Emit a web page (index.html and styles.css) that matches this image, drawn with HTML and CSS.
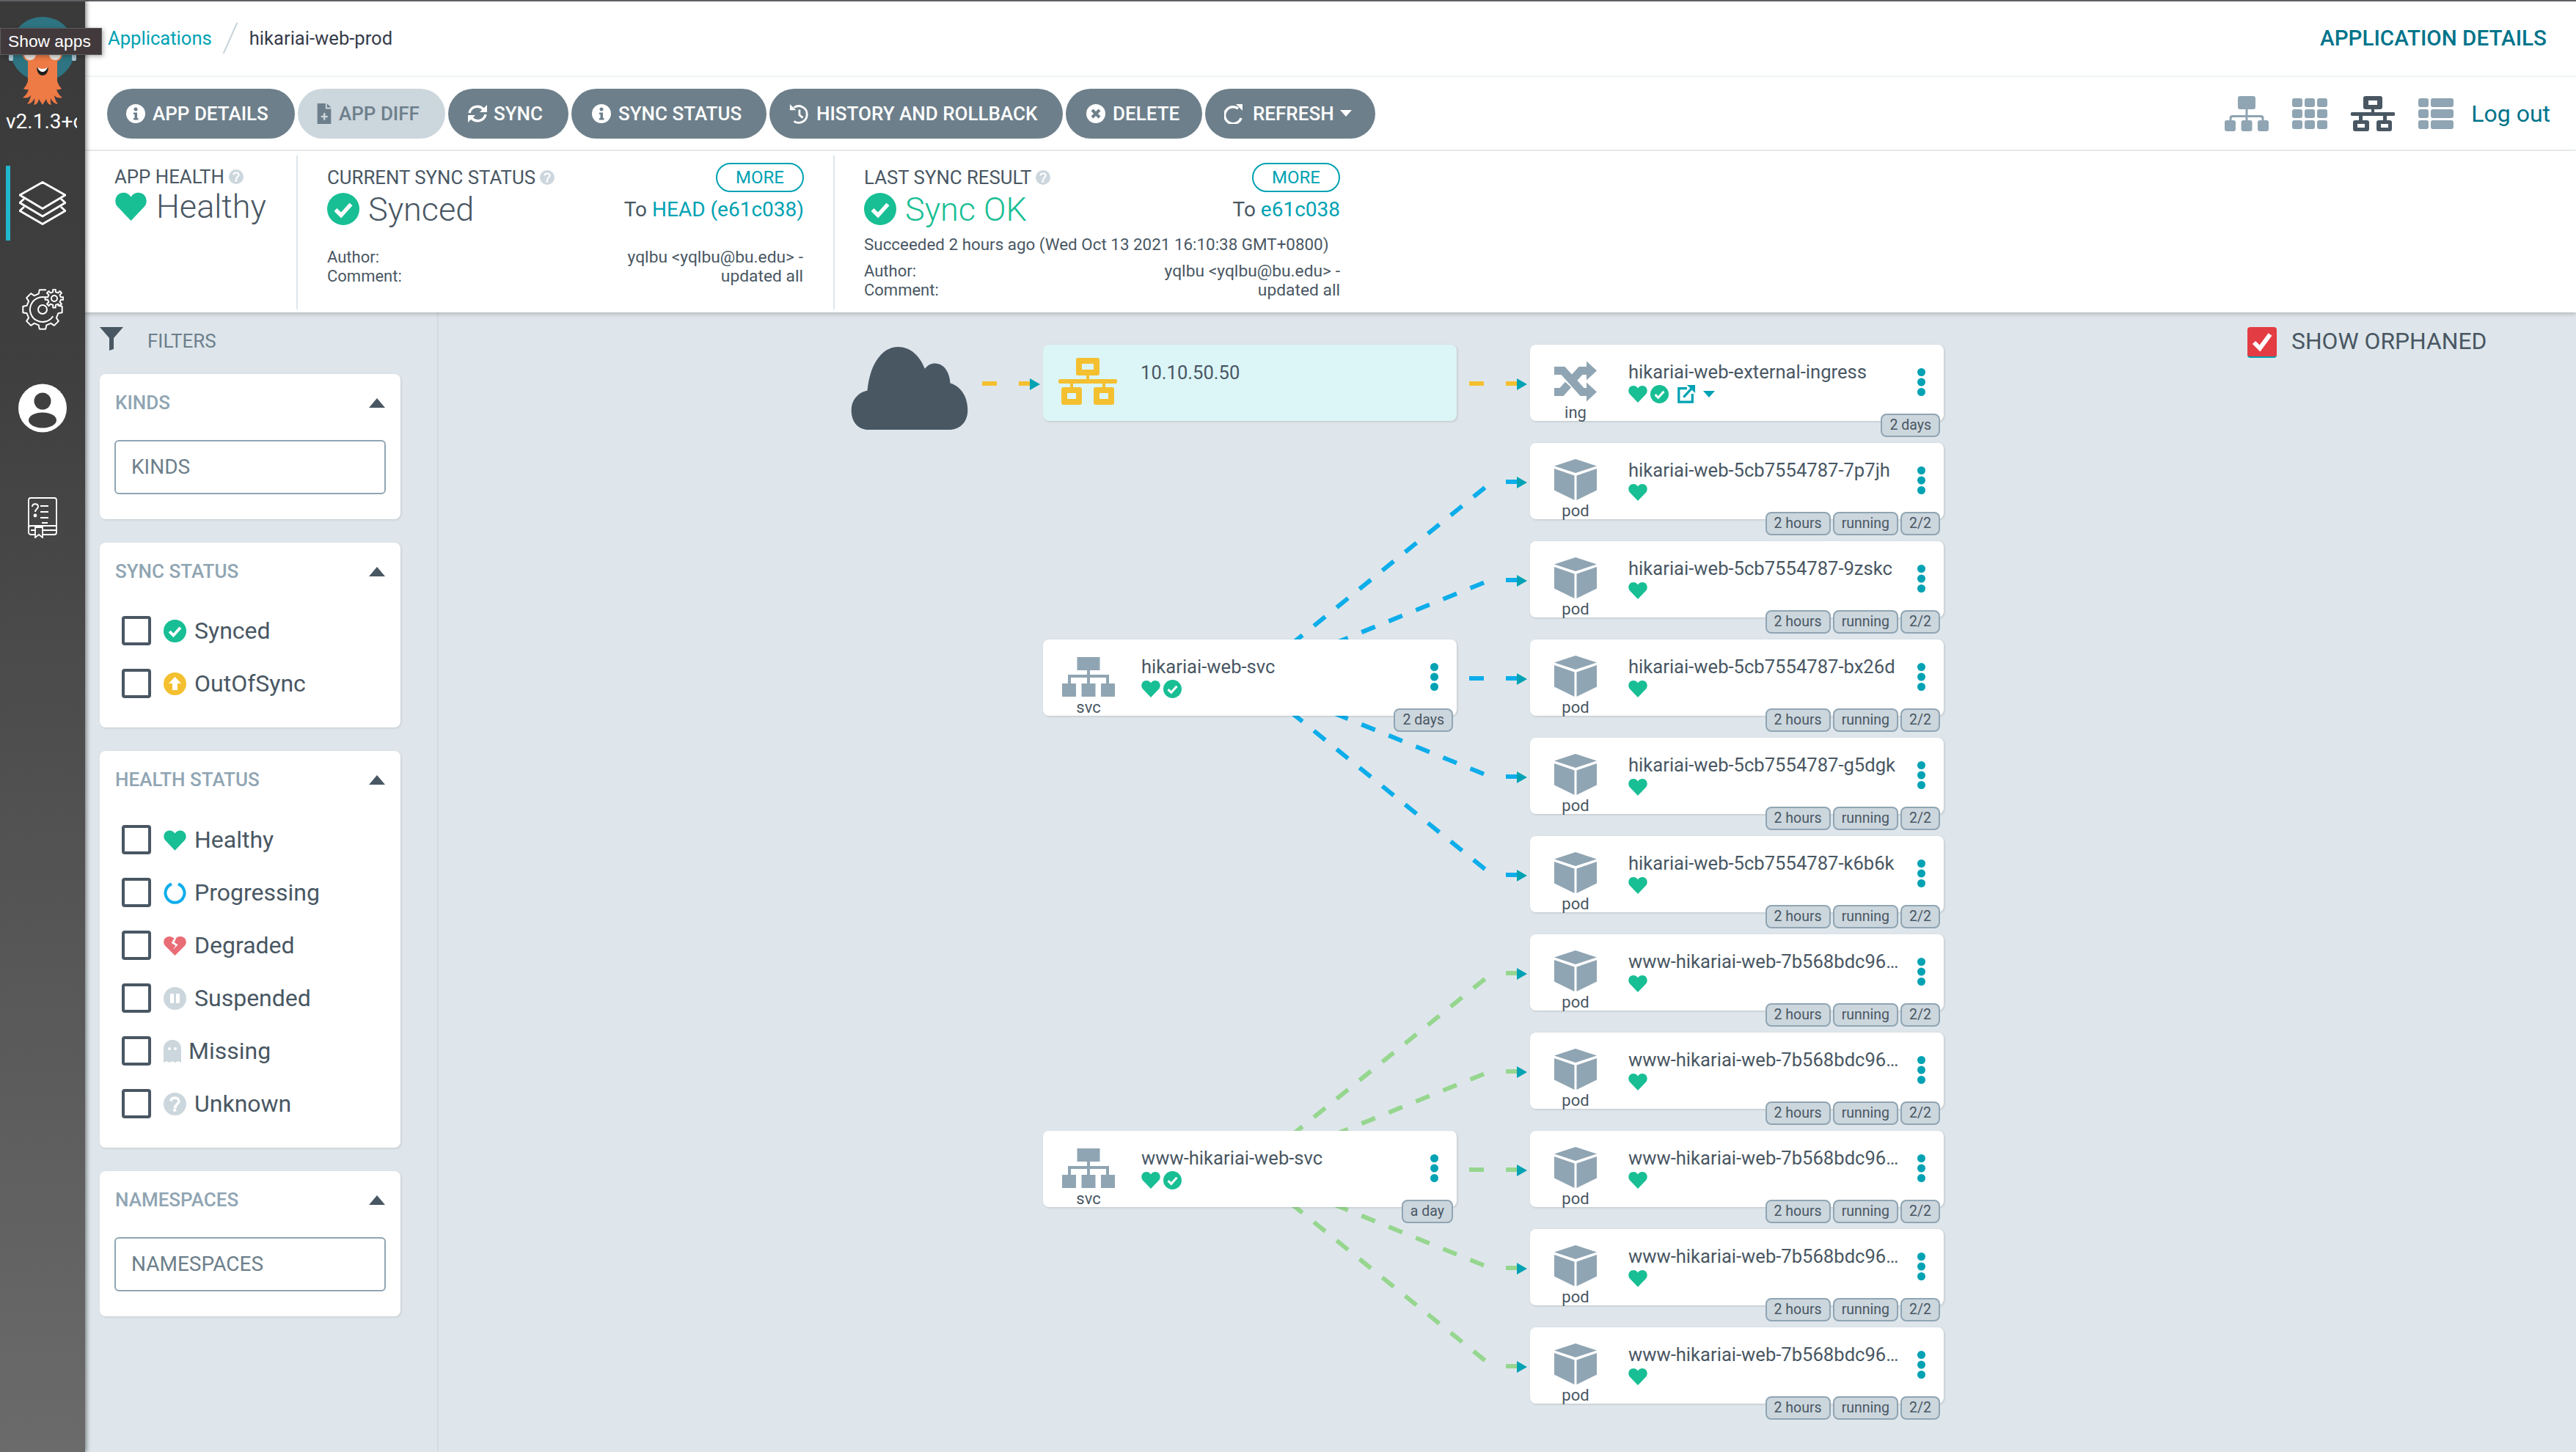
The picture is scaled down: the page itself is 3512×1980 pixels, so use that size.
FILE: index.html
```html
<!DOCTYPE html>
<html lang="en">
<head>
    <meta charset="UTF-8">
    <title>hikariai-web-prod - Argo CD</title>
    <link rel="stylesheet" href="styles.css">
</head>
<body>
    <!-- shared icons -->
    <svg class="icon-defs" width="0" height="0">
        <symbol id="i-heart" viewBox="0 0 26 24"><path d="M13 24 2 12.500C-1.500 8.500.500 1 7 1c2.800 0 4.800 1.500 6 3.500C14.200 2.500 16.200 1 19 1c6.500 0 8.500 7.500 5 11.500z"/></symbol>
        <symbol id="i-check" viewBox="0 0 44 44"><circle cx="22" cy="22" r="22"/><path d="M11.500 23 19 30.500 32.500 15.500" fill="none" stroke="#fff" stroke-width="5.500"/></symbol>
        <symbol id="i-pod" viewBox="0 0 58 56"><path d="M29 0 58 9.500 29 19 0 9.500zM0 13 27.500 22.500V56L0 42.500zM58 13 30.500 22.500V56L58 42.500z"/></symbol>
        <symbol id="i-svc" viewBox="0 0 72 54"><path d="M20.500 0h31v18h-31zM34 18h4v18h-4zM8 24h56v4H8zM8 24h4v12H8zM60 24h4v12h-4zM0 36h19v18H0zM26.500 36h19v18h-19zM53 36h19v18H53z"/></symbol>
        <symbol id="i-dots" viewBox="0 0 11 38"><circle cx="5.500" cy="5.500" r="5.500"/><circle cx="5.500" cy="19" r="5.500"/><circle cx="5.500" cy="32.500" r="5.500"/></symbol>
        <symbol id="i-info" viewBox="0 0 26 26"><circle cx="13" cy="13" r="13" fill="#fff"/><path d="M13 4.500a2.500 2.500 0 1 1 0 5 2.500 2.500 0 0 1 0-5zM10 11.500h5V19h1.500v2.500h-6.500V19H11.500v-5H10z" fill="#6d7f8b"/></symbol>
        <symbol id="i-help" viewBox="0 0 20 20"><circle cx="10" cy="10" r="10"/><path d="M6.500 7.500C6.500 5.500 8 4.500 10 4.500s3.500 1.100 3.500 3c0 2.600-3 2.400-3 5h-1.500" fill="none" stroke="#fff" stroke-width="2.200"/><circle cx="9.800" cy="15.300" r="1.500" fill="#fff"/></symbol>
    </svg>

    <nav class="nav">
        <div class="logo">
            <svg class="logo-img" viewBox="0 0 116 123">
                <circle cx="58" cy="44" r="44" fill="#2e7482"/>
                <rect x="12" y="50" width="6" height="10" rx="2" fill="#a9c6d6"/>
                <rect x="98" y="50" width="6" height="10" rx="2" fill="#a9c6d6"/>
                <path d="M38 50V88Q36 94 32 98Q36 100 39 99Q37 106 31 110Q38 112 42 107Q41 114 37 119Q44 118 47 111Q48 116 46 120Q52 119 53 112L58 120 63 112Q64 119 70 120Q68 116 69 111Q72 118 79 119Q75 114 74 107Q78 112 85 110Q79 106 77 99Q80 100 84 98Q80 94 78 88V50Z" fill="#ee7a45"/>
                <circle cx="41" cy="51" r="10" fill="#ee7a45"/>
                <circle cx="75" cy="51" r="10" fill="#ee7a45"/>
                <circle cx="41" cy="51" r="8" fill="#e9e4df"/>
                <circle cx="75" cy="51" r="8" fill="#e9e4df"/>
                <path d="M50 69Q58 74 66 69Q65 80 58 80Q51 80 50 69z" fill="#1e1e1e"/>
                <path d="M51 69Q58 73 65 69Q62 75 58 75Q54 75 51 69z" fill="#fff"/>
            </svg>
        </div>
        <div class="nav-tooltip">Show apps</div>
        <div class="version">v2.1.3+c1b2e4a</div>

        <div class="nav-item nav-active">
            <svg width="64" height="60" viewBox="0 0 64 60" fill="none" stroke="#fff" stroke-width="2.800" stroke-linejoin="round">
                <path d="M32 1.500 63 19 32 37.500 1 19z"/>
                <path d="M7 24 1 29.500 32 48 63 29.500 57 24"/>
                <path d="M7 35 1 40.500 32 58.500 63 40.500 57 35"/>
            </svg>
        </div>
        <div class="nav-item nav-gear">
            <svg width="58" height="56" viewBox="0 0 58 56" fill="none" stroke="#fff" stroke-width="2" stroke-linejoin="round" stroke-linecap="round">
                <path d="M50.350 22.680 55.670 23.780V32.220L50.350 33.320 47.860 39.330 50.840 43.870 44.870 49.840 40.330 46.860 34.320 49.350 33.220 54.670H24.780L23.680 49.350 17.670 46.860 13.130 49.840 7.160 43.870 10.140 39.330 7.650 33.320 2.330 32.220V23.780L7.650 22.680 10.140 16.670 7.160 12.130 13.130 6.160 17.670 9.140 23.680 6.650 24.780 1.330H33.220"/>
                <path d="M33.400 11.600A17 17 0 1 0 42.900 37.750"/>
                <circle cx="29" cy="28" r="6"/>
                <g transform="translate(45 13)">
                    <path fill="#3e3e3e" d="M8.800-1.870 12.380-1.740V1.740L8.800 1.870 7.550 4.900 9.980 7.520 7.520 9.980 4.900 7.550 1.870 8.800 1.740 12.380H-1.740L-1.870 8.800-4.900 7.550-7.520 9.980-9.980 7.520-7.550 4.900-8.800 1.870-12.380 1.740V-1.740L-8.800-1.870-7.550-4.900-9.980-7.520-7.520-9.980-4.900-7.550-1.870-8.800-1.740-12.380H1.740L1.870-8.800 4.900-7.550 7.520-9.980 9.980-7.520 7.550-4.900z"/>
                    <circle r="4"/>
                </g>
            </svg>
        </div>
        <div class="nav-item nav-user">
            <svg width="66" height="67" viewBox="0 0 66 67">
                <circle cx="33" cy="33.500" r="33" fill="#fff"/>
                <circle cx="33" cy="24" r="11.500" fill="#3f3f3f"/>
                <ellipse cx="33" cy="50" rx="19" ry="10.500" fill="#3f3f3f"/>
            </svg>
        </div>
        <div class="nav-item nav-book">
            <svg width="40" height="56" viewBox="0 0 40 56" fill="none" stroke="#fff" stroke-width="1.800">
                <path d="M4 1h32a3 3 0 0 1 3 3v44a3 3 0 0 1-3 3H4a3 3 0 0 1-3-3V4a3 3 0 0 1 3-3z"/>
                <path d="M1 42a3 3 0 0 1 3-3h35M4 45h35"/>
                <path d="M10 41h10v14l-5-4-5 4z" fill="#474747"/>
                <path d="M17 12h11M17 20h11M17 28h11M19 35h8" stroke-width="2"/>
                <path d="M6 13c0-5 8-5 8 0 0 3-4 3-4 7" stroke-width="2"/>
                <circle cx="10" cy="25" r="1.500" fill="#fff"/>
            </svg>
        </div>
    </nav>

    <div class="main">
        <div class="top-bar">
            <div class="breadcrumbs">
                <a class="crumb-link">Applications</a>
                <span class="crumb-sep"></span>
                <span class="crumb-current">hikariai-web-prod</span>
            </div>
            <div class="page-title">APPLICATION DETAILS</div>
        </div>

        <div class="toolbar">
            <div class="actions">
                <div class="btn btn-details"><svg class="btn-icon"><use href="#i-info"/></svg>APP DETAILS</div>
                <div class="btn btn-diff">
                    <svg class="btn-icon btn-icon-file" viewBox="0 0 20 30"><path d="M0 0h12v8h8v22H0z" fill="#6d7f8b"/><path d="M14 0l6 6h-6z" fill="#6d7f8b"/><path d="M9 14h2.500v4H15v2.500h-3.500v4H9v-4H5.500V18H9z" fill="#ccd6dd"/></svg>
                    APP DIFF
                </div>
                <div class="btn btn-sync">
                    <svg class="btn-icon" viewBox="0 0 28 26" fill="none" stroke="#fff" stroke-width="3.500"><path d="M3 12A11 11 0 0 1 22 7"/><path d="M27 1V11H17z" fill="#fff" stroke="none"/><path d="M25 14A11 11 0 0 1 6 19"/><path d="M1 25V15H11z" fill="#fff" stroke="none"/></svg>
                    SYNC
                </div>
                <div class="btn btn-status"><svg class="btn-icon"><use href="#i-info"/></svg>SYNC STATUS</div>
                <div class="btn btn-history">
                    <svg class="btn-icon" viewBox="0 0 28 30" fill="none" stroke="#fff" stroke-width="3"><path d="M7 6C14 1 26 5 26 16S14 31 7 26"/><path d="M1 1v9h9z" fill="#fff" stroke="none"/><path d="M15 9v8l5 4"/></svg>
                    HISTORY AND ROLLBACK
                </div>
                <div class="btn btn-delete">
                    <svg class="btn-icon" viewBox="0 0 26 26"><circle cx="13" cy="13" r="13" fill="#fff"/><path d="M8 8l10 10M18 8 8 18" stroke="#6d7f8b" stroke-width="4"/></svg>
                    DELETE
                </div>
                <div class="btn btn-refresh">
                    <svg class="btn-icon" viewBox="0 0 26 28" fill="none" stroke="#fff" stroke-width="3.500"><path d="M19 7A11.500 11.500 0 1 0 23 20"/><path d="M16 1h9v9z" fill="#fff" stroke="none"/></svg>
                    REFRESH<span class="btn-caret"></span>
                </div>
            </div>
            <div class="view-tools">
                <svg class="view-icon view-tree" viewBox="0 0 60 48"><path d="M21 0h18a3 3 0 0 1 3 3v12a3 3 0 0 1-3 3H21a3 3 0 0 1-3-3V3a3 3 0 0 1 3-3zM28.500 18h3v8h18a4 4 0 0 1 4 4v3h-3v-2a2 2 0 0 0-2-2H31.500v5h-3v-5H11.500a2 2 0 0 0-2 2v2h-3v-3a4 4 0 0 1 4-4h18z"/><rect y="33" width="15" height="15" rx="3"/><rect x="22.500" y="33" width="15" height="15" rx="3"/><rect x="45" y="33" width="15" height="15" rx="3"/></svg>
                <svg class="view-icon view-grid" viewBox="0 0 48 42"><rect width="14" height="12" rx="3"/><rect x="17" width="14" height="12" rx="3"/><rect x="34" width="14" height="12" rx="3"/><rect y="15" width="14" height="12" rx="3"/><rect x="17" y="15" width="14" height="12" rx="3"/><rect x="34" y="15" width="14" height="12" rx="3"/><rect y="30" width="14" height="12" rx="3"/><rect x="17" y="30" width="14" height="12" rx="3"/><rect x="34" y="30" width="14" height="12" rx="3"/></svg>
                <svg class="view-icon view-network" viewBox="0 0 60 48"><path fill-rule="evenodd" d="M20 0h20a3 3 0 0 1 3 3v12a3 3 0 0 1-3 3H32v4h26a2 2 0 0 1 0 5H49v6h4a3 3 0 0 1 3 3v9a3 3 0 0 1-3 3H38a3 3 0 0 1-3-3v-9a3 3 0 0 1 3-3h6v-6H16v6h6a3 3 0 0 1 3 3v9a3 3 0 0 1-3 3H6a3 3 0 0 1-3-3v-9a3 3 0 0 1 3-3h5v-6H2a2 2 0 0 1 0-5h26v-4h-8a3 3 0 0 1-3-3V3a3 3 0 0 1 3-3zm4 6v6h12V6zM9 38v5h10v-5zm32 0v5h10v-5z"/></svg>
                <svg class="view-icon view-list" viewBox="0 0 48 42"><rect width="14" height="12" rx="3"/><rect x="17" width="31" height="12" rx="3"/><rect y="15" width="14" height="12" rx="3"/><rect x="17" y="15" width="31" height="12" rx="3"/><rect y="30" width="14" height="12" rx="3"/><rect x="17" y="30" width="31" height="12" rx="3"/></svg>
                <a class="logout">Log out</a>
            </div>
        </div>

        <div class="summary">
            <div class="summary-block block-health">
                <div class="summary-label">APP HEALTH <svg class="help"><use href="#i-help"/></svg></div>
                <div class="summary-status">
                    <svg class="status-heart"><use href="#i-heart"/></svg>
                    <span>Healthy</span>
                </div>
            </div>
            <div class="summary-block block-sync">
                <div class="summary-head">
                    <div class="summary-label">CURRENT SYNC STATUS <svg class="help"><use href="#i-help"/></svg></div>
                    <a class="more">MORE</a>
                </div>
                <div class="summary-head">
                    <div class="summary-status">
                        <svg class="status-check"><use href="#i-check"/></svg>
                        <span>Synced</span>
                    </div>
                    <div class="revision">To <a>HEAD (e61c038)</a></div>
                </div>
                <div class="commit commit-current">
                    <div>Author:<br>Comment:</div>
                    <div class="commit-value">yqlbu &lt;yqlbu@bu.edu&gt; -<br>updated all</div>
                </div>
            </div>
            <div class="summary-block block-result">
                <div class="summary-head">
                    <div class="summary-label">LAST SYNC RESULT <svg class="help"><use href="#i-help"/></svg></div>
                    <a class="more">MORE</a>
                </div>
                <div class="summary-head">
                    <div class="summary-status status-ok">
                        <svg class="status-check"><use href="#i-check"/></svg>
                        <span>Sync OK</span>
                    </div>
                    <div class="revision">To <a>e61c038</a></div>
                </div>
                <div class="succeeded">Succeeded 2 hours ago (Wed Oct 13 2021 16:10:38 GMT+0800)</div>
                <div class="commit">
                    <div>Author:<br>Comment:</div>
                    <div class="commit-value">yqlbu &lt;yqlbu@bu.edu&gt; -<br>updated all</div>
                </div>
            </div>
        </div>

        <div class="content">
            <aside class="filters">
                <div class="filters-head">
                    <svg class="filter-icon" viewBox="0 0 32 32"><path d="M0 0h32L19 15v15l-6 2V15z"/></svg>
                    <span>FILTERS</span>
                </div>

                <div class="filter-card">
                    <div class="filter-title">KINDS<span class="filter-caret"></span></div>
                    <div class="filter-input">KINDS</div>
                </div>

                <div class="filter-card">
                    <div class="filter-title">SYNC STATUS<span class="filter-caret"></span></div>
                    <div class="filter-rows">
                        <div class="filter-row"><span class="box"></span><svg class="row-icon row-green"><use href="#i-check"/></svg>Synced</div>
                        <div class="filter-row">
                            <span class="box"></span>
                            <svg class="row-icon" viewBox="0 0 31 31"><circle cx="15.500" cy="15.500" r="15.500" fill="#f4c030"/><path d="M15.500 6 24 15h-5v9h-7v-9H7z" fill="#fff"/></svg>
                            OutOfSync
                        </div>
                    </div>
                </div>

                <div class="filter-card">
                    <div class="filter-title">HEALTH STATUS<span class="filter-caret"></span></div>
                    <div class="filter-rows rows-health">
                        <div class="filter-row"><span class="box"></span><svg class="row-icon row-green"><use href="#i-heart"/></svg>Healthy</div>
                        <div class="filter-row">
                            <span class="box"></span>
                            <svg class="row-icon" viewBox="0 0 31 31" fill="none" stroke="#0dadea" stroke-width="4"><path d="M11 3.500a13 13 0 1 0 9 0"/></svg>
                            Progressing
                        </div>
                        <div class="filter-row">
                            <span class="box"></span>
                            <svg class="row-icon" viewBox="0 0 32 28"><path d="M16 28 2 14C-2 9 1 1 8 1c3 0 5 1 7 3l-4 6 6 4-4 6 7-7-5-4 3-6c2-2 4-2 6-2 7 0 10 8 6 13z" fill="#e96d76"/></svg>
                            Degraded
                        </div>
                        <div class="filter-row">
                            <span class="box"></span>
                            <svg class="row-icon" viewBox="0 0 31 31"><circle cx="15.500" cy="15.500" r="15.500" fill="#ccd6dd"/><path d="M9 9h5v13H9zM17 9h5v13h-5z" fill="#fff"/></svg>
                            Suspended
                        </div>
                        <div class="filter-row row-missing">
                            <span class="box"></span>
                            <svg class="row-icon" viewBox="0 0 24 31"><path d="M12 0c7 0 12 5 12 12v19l-4-2-4 2-4-2-4 2-4-2-4 2V12C0 5 5 0 12 0z" fill="#ccd6dd"/><circle cx="8" cy="12" r="2" fill="#fff"/><circle cx="16" cy="12" r="2" fill="#fff"/></svg>
                            Missing
                        </div>
                        <div class="filter-row"><span class="box"></span><svg class="row-icon row-grey"><use href="#i-help"/></svg>Unknown</div>
                    </div>
                </div>

                <div class="filter-card">
                    <div class="filter-title">NAMESPACES<span class="filter-caret"></span></div>
                    <div class="filter-input">NAMESPACES</div>
                </div>
            </aside>

            <div class="graph">
                <label class="orphaned">
                    <span class="orphaned-box"><svg viewBox="0 0 40 40"><path d="M9 21l8 8 14-19" fill="none" stroke="#fff" stroke-width="6"/></svg></span>
                    SHOW ORPHANED
                </label>

                <!-- edges use page coordinates: a dashed run, then a short tail into the arrow -->
                <svg class="edges" viewBox="598 426 2914 1554">
                    <defs>
                        <marker id="arrow" markerUnits="userSpaceOnUse" markerWidth="14" markerHeight="16" refX="0" refY="7" orient="0">
                            <path d="M0 0 14 8 0 16z" fill="#00a2b3"/>
                        </marker>
                    </defs>
                    <g class="edge edge-yellow">
                        <path d="M1339 523H1359"/>
                        <path class="tail" d="M1389 523H1404" marker-end="url(#arrow)"/>
                        <path d="M1723 523H2023"/>
                        <path class="tail" d="M2053 523H2068" marker-end="url(#arrow)"/>
                    </g>
                    <g class="edge edge-blue">
                        <path d="M1698 929 2025.500 664"/>
                        <path class="tail" d="M2053 657H2068" marker-end="url(#arrow)"/>
                        <path d="M1708 922.300 2023 794.500"/>
                        <path class="tail" d="M2053 791H2068" marker-end="url(#arrow)"/>
                        <path d="M1723 925H2023"/>
                        <path class="tail" d="M2053 925H2068" marker-end="url(#arrow)"/>
                        <path d="M1708 927.700 2023 1055.500"/>
                        <path class="tail" d="M2053 1059H2068" marker-end="url(#arrow)"/>
                        <path d="M1698 921 2025.500 1186"/>
                        <path class="tail" d="M2053 1193H2068" marker-end="url(#arrow)"/>
                    </g>
                    <g class="edge edge-green">
                        <path d="M1698 1599 2025.500 1334"/>
                        <path class="tail" d="M2053 1327H2068" marker-end="url(#arrow)"/>
                        <path d="M1708 1592.300 2023 1464.500"/>
                        <path class="tail" d="M2053 1461H2068" marker-end="url(#arrow)"/>
                        <path d="M1723 1595H2023"/>
                        <path class="tail" d="M2053 1595H2068" marker-end="url(#arrow)"/>
                        <path d="M1708 1597.700 2023 1725.500"/>
                        <path class="tail" d="M2053 1729H2068" marker-end="url(#arrow)"/>
                        <path d="M1698 1591 2025.500 1856"/>
                        <path class="tail" d="M2053 1863H2068" marker-end="url(#arrow)"/>
                    </g>
                </svg>

                <svg class="cloud" viewBox="0 0 160 114"><path d="M24 114C8 114 0 102 0 87c0-13 8-24 22-27C25 25 42 0 64 0c17 0 30 12 37 30 5-6 10-8 16-7 11 1 18 12 19 27 14 4 24 18 24 37 0 16-10 27-26 27z"/></svg>

                <div class="node node-lb">
                    <svg class="lb-icon" viewBox="0 0 80 64"><path fill-rule="evenodd" d="M27 0h26a3 3 0 0 1 3 3v18a3 3 0 0 1-3 3H42v5h36a2 2 0 0 1 2 2v2a2 2 0 0 1-2 2H64v5h9a3 3 0 0 1 3 3v18a3 3 0 0 1-3 3H51a3 3 0 0 1-3-3V43a3 3 0 0 1 3-3h9v-5H20v5h9a3 3 0 0 1 3 3v18a3 3 0 0 1-3 3H7a3 3 0 0 1-3-3V43a3 3 0 0 1 3-3h9v-5H2a2 2 0 0 1-2-2v-2a2 2 0 0 1 2-2h36v-5H27a3 3 0 0 1-3-3V3a3 3 0 0 1 3-3zm5 8v8h16V8zM12 48v8h12v-8zm44 0v8h12v-8z"/></svg>
                    <div class="node-name lb-name">10.10.50.50</div>
                </div>

                <div class="node node-svc svc-web">
                    <div class="kind"><svg class="kind-svc"><use href="#i-svc"/></svg><span>svc</span></div>
                    <div class="node-info">
                        <div class="node-name">hikariai-web-svc</div>
                        <div class="node-status"><svg class="st-heart"><use href="#i-heart"/></svg><svg class="st-check"><use href="#i-check"/></svg></div>
                    </div>
                    <svg class="node-dots"><use href="#i-dots"/></svg>
                    <div class="badges"><span>2 days</span></div>
                </div>
                <div class="node node-svc svc-www">
                    <div class="kind"><svg class="kind-svc"><use href="#i-svc"/></svg><span>svc</span></div>
                    <div class="node-info">
                        <div class="node-name">www-hikariai-web-svc</div>
                        <div class="node-status"><svg class="st-heart"><use href="#i-heart"/></svg><svg class="st-check"><use href="#i-check"/></svg></div>
                    </div>
                    <svg class="node-dots"><use href="#i-dots"/></svg>
                    <div class="badges"><span>a day</span></div>
                </div>

                <div class="pods">
                    <div class="node">
                        <div class="kind">
                            <svg class="kind-ing" viewBox="0 0 58 55"><g fill="none" stroke="#90a5b3" stroke-width="11"><path d="M0 13H12L38 42H46"/><path d="M0 42H10L19 32"/><path d="M26 24 36 13H46"/></g><path d="M44 0 58 13 44 26zM44 29 58 42 44 55z"/></svg>
                            <span>ing</span>
                        </div>
                        <div class="node-info">
                            <div class="node-name">hikariai-web-external-ingress</div>
                            <div class="node-status">
                                <svg class="st-heart"><use href="#i-heart"/></svg><svg class="st-check"><use href="#i-check"/></svg>
                                <svg class="st-link" viewBox="0 0 26 28" fill="none" stroke="#00a2b3" stroke-width="3.500"><path d="M14 6H2v20h20V14"/><path d="M9 19 23 4"/><path d="M14 1h12v12z" fill="#00a2b3" stroke="none"/></svg>
                                <span class="st-caret"></span>
                            </div>
                        </div>
                        <svg class="node-dots"><use href="#i-dots"/></svg>
                        <div class="badges"><span>2 days</span></div>
                    </div>

                    <div class="node">
                        <div class="kind"><svg class="kind-pod"><use href="#i-pod"/></svg><span>pod</span></div>
                        <div class="node-info"><div class="node-name">hikariai-web-5cb7554787-7p7jh</div><div class="node-status"><svg class="st-heart"><use href="#i-heart"/></svg></div></div>
                        <svg class="node-dots"><use href="#i-dots"/></svg>
                        <div class="badges"><span>2 hours</span><span>running</span><span>2/2</span></div>
                    </div>
                    <div class="node">
                        <div class="kind"><svg class="kind-pod"><use href="#i-pod"/></svg><span>pod</span></div>
                        <div class="node-info"><div class="node-name">hikariai-web-5cb7554787-9zskc</div><div class="node-status"><svg class="st-heart"><use href="#i-heart"/></svg></div></div>
                        <svg class="node-dots"><use href="#i-dots"/></svg>
                        <div class="badges"><span>2 hours</span><span>running</span><span>2/2</span></div>
                    </div>
                    <div class="node">
                        <div class="kind"><svg class="kind-pod"><use href="#i-pod"/></svg><span>pod</span></div>
                        <div class="node-info"><div class="node-name">hikariai-web-5cb7554787-bx26d</div><div class="node-status"><svg class="st-heart"><use href="#i-heart"/></svg></div></div>
                        <svg class="node-dots"><use href="#i-dots"/></svg>
                        <div class="badges"><span>2 hours</span><span>running</span><span>2/2</span></div>
                    </div>
                    <div class="node">
                        <div class="kind"><svg class="kind-pod"><use href="#i-pod"/></svg><span>pod</span></div>
                        <div class="node-info"><div class="node-name">hikariai-web-5cb7554787-g5dgk</div><div class="node-status"><svg class="st-heart"><use href="#i-heart"/></svg></div></div>
                        <svg class="node-dots"><use href="#i-dots"/></svg>
                        <div class="badges"><span>2 hours</span><span>running</span><span>2/2</span></div>
                    </div>
                    <div class="node">
                        <div class="kind"><svg class="kind-pod"><use href="#i-pod"/></svg><span>pod</span></div>
                        <div class="node-info"><div class="node-name">hikariai-web-5cb7554787-k6b6k</div><div class="node-status"><svg class="st-heart"><use href="#i-heart"/></svg></div></div>
                        <svg class="node-dots"><use href="#i-dots"/></svg>
                        <div class="badges"><span>2 hours</span><span>running</span><span>2/2</span></div>
                    </div>

                    <div class="node">
                        <div class="kind"><svg class="kind-pod"><use href="#i-pod"/></svg><span>pod</span></div>
                        <div class="node-info"><div class="node-name">www-hikariai-web-7b568bdc96-4fkdz</div><div class="node-status"><svg class="st-heart"><use href="#i-heart"/></svg></div></div>
                        <svg class="node-dots"><use href="#i-dots"/></svg>
                        <div class="badges"><span>2 hours</span><span>running</span><span>2/2</span></div>
                    </div>
                    <div class="node">
                        <div class="kind"><svg class="kind-pod"><use href="#i-pod"/></svg><span>pod</span></div>
                        <div class="node-info"><div class="node-name">www-hikariai-web-7b568bdc96-8tnvw</div><div class="node-status"><svg class="st-heart"><use href="#i-heart"/></svg></div></div>
                        <svg class="node-dots"><use href="#i-dots"/></svg>
                        <div class="badges"><span>2 hours</span><span>running</span><span>2/2</span></div>
                    </div>
                    <div class="node">
                        <div class="kind"><svg class="kind-pod"><use href="#i-pod"/></svg><span>pod</span></div>
                        <div class="node-info"><div class="node-name">www-hikariai-web-7b568bdc96-cx9qm</div><div class="node-status"><svg class="st-heart"><use href="#i-heart"/></svg></div></div>
                        <svg class="node-dots"><use href="#i-dots"/></svg>
                        <div class="badges"><span>2 hours</span><span>running</span><span>2/2</span></div>
                    </div>
                    <div class="node">
                        <div class="kind"><svg class="kind-pod"><use href="#i-pod"/></svg><span>pod</span></div>
                        <div class="node-info"><div class="node-name">www-hikariai-web-7b568bdc96-jr2lp</div><div class="node-status"><svg class="st-heart"><use href="#i-heart"/></svg></div></div>
                        <svg class="node-dots"><use href="#i-dots"/></svg>
                        <div class="badges"><span>2 hours</span><span>running</span><span>2/2</span></div>
                    </div>
                    <div class="node">
                        <div class="kind"><svg class="kind-pod"><use href="#i-pod"/></svg><span>pod</span></div>
                        <div class="node-info"><div class="node-name">www-hikariai-web-7b568bdc96-zw5hs</div><div class="node-status"><svg class="st-heart"><use href="#i-heart"/></svg></div></div>
                        <svg class="node-dots"><use href="#i-dots"/></svg>
                        <div class="badges"><span>2 hours</span><span>running</span><span>2/2</span></div>
                    </div>
                </div>
            </div>
        </div>
    </div>
</body>
</html>
```
FILE: styles.css
```css
* {
    box-sizing: border-box;
}

body {
    margin: 0;
    width: 3512px;
    height: 1980px;
    overflow: hidden;
    display: flex;
    font-family: 'Roboto', sans-serif;
    color: #495763;
    background-color: #dee6eb;
}

.icon-defs {
    position: absolute;
}

/* left nav */
.nav {
    position: relative;
    z-index: 5;
    width: 116px;
    flex-shrink: 0;
    padding-top: 21px;
    color: #fff;
    background: linear-gradient(#3a3a3a 0%, #3f3f3f 25%, #6b6b6b 100%);
    box-shadow: 2px 0 6px rgba(0, 0, 0, 0.45);
    border-top: 2px solid #5f6064;
}

.logo {
    height: 123px;
}

.logo-img {
    width: 116px;
    height: 123px;
    display: block;
}

.nav-tooltip {
    position: absolute;
    top: 36px;
    left: 0;
    width: 139px;
    height: 37px;
    padding-left: 10px;
    font-family: 'Liberation Sans', sans-serif;
    font-size: 22.800px;
    line-height: 34px;
    white-space: nowrap;
    background-color: #41393c;
    border: 1px solid #5c5c5c;
    box-shadow: 2px 2px 6px rgba(0, 0, 0, 0.3);
}

.version {
    width: 97px;
    margin-left: 8px;
    margin-top: 3px;
    font-size: 28px;
    line-height: 34px;
    white-space: nowrap;
    overflow: hidden;
}

.nav-item {
    display: flex;
    justify-content: center;
    align-items: center;
}

.nav-active {
    height: 102px;
    margin-top: 43px;
    border-left: 6px solid #1fb8cc;
    margin-left: 8px;
    padding-right: 14px;
}

.nav-gear {
    margin-top: 66px;
}

.nav-user {
    margin-top: 73px;
}

.nav-book {
    margin-top: 88px;
}

/* main column */
.main {
    flex-grow: 1;
    display: flex;
    flex-direction: column;
    min-width: 0;
    border-top: 2px solid #5f6064;
}

.top-bar {
    display: flex;
    justify-content: space-between;
    align-items: center;
    height: 103px;
    padding: 0 40px 2px 31px;
    background-color: #fff;
    border-bottom: 2px solid #eff3f6;
}

.breadcrumbs {
    display: flex;
    align-items: center;
    font-size: 25.600px;
}

.crumb-link {
    color: #00a2b3;
}

.crumb-sep {
    width: 2px;
    height: 46px;
    margin: 0 25px 0 24px;
    background-color: #c8d3da;
    transform: rotate(24deg);
}

.crumb-current {
    color: #363c4a;
}

.page-title {
    font-size: 29.600px;
    font-weight: 500;
    color: #00748a;
}

.toolbar {
    display: flex;
    justify-content: space-between;
    align-items: center;
    height: 101px;
    padding: 0 35px 0 30px;
    background-color: #fff;
    border-bottom: 2px solid #eff3f6;
}

.actions {
    display: flex;
    gap: 4px;
}

.btn {
    display: flex;
    align-items: center;
    height: 68px;
    padding: 0 26px;
    font-size: 26px;
    font-weight: 500;
    white-space: nowrap;
    color: #fff;
    background-color: #6d7f8b;
    border-radius: 34px;
}

.btn-details { width: 256px; }
.btn-diff { width: 201px; color: #6d7f8b; background-color: #ccd6dd; }
.btn-sync { width: 164px; }
.btn-status { width: 266px; padding-left: 28px; }
.btn-history { width: 400px; }
.btn-delete { width: 186px; padding-left: 28px; }
.btn-refresh { width: 232px; }

.btn-icon {
    width: 26px;
    height: 28px;
    margin-right: 10px;
    flex-shrink: 0;
}

.btn-icon-file {
    width: 20px;
    margin-right: 10px;
}

.btn-sync .btn-icon {
    width: 28px;
    height: 26px;
    margin-right: 8px;
}

.btn-history .btn-icon {
    width: 28px;
}

.btn-refresh .btn-icon {
    margin-right: 13px;
}

.btn-caret {
    width: 0;
    height: 0;
    margin-left: 8px;
    border-left: 8px solid transparent;
    border-right: 8px solid transparent;
    border-top: 9px solid #fff;
}

.view-tools {
    display: flex;
    align-items: center;
}

.view-icon {
    fill: #90a5b3;
}

.view-tree {
    width: 60px;
    height: 48px;
    margin-right: 32px;
}

.view-grid {
    width: 48px;
    height: 42px;
    margin-right: 32px;
}

.view-network {
    width: 60px;
    height: 48px;
    margin-right: 32px;
    fill: #495763;
}

.view-list {
    width: 48px;
    height: 42px;
    margin-right: 24px;
}

.logout {
    font-size: 32px;
    color: #00748a;
}

/* summary strip */
.summary {
    position: relative;
    z-index: 2;
    display: flex;
    height: 220px;
    padding: 6px 0 4px;
    background-color: #fff;
    box-shadow: 0 2px 6px rgba(0, 0, 0, 0.22);
}

.summary-block {
    height: 210px;
}

.block-health {
    width: 288px;
    padding: 14px 0 0 40px;
}

.block-sync {
    width: 732px;
    padding: 10px 40px 0 40px;
    border-left: 2px solid #dee6eb;
}

.block-result {
    width: 731px;
    padding: 10px 0 0 40px;
    border-left: 2px solid #dee6eb;
}

.block-result .summary-head {
    width: 649px;
}

.summary-label {
    display: flex;
    align-items: center;
    gap: 6px;
    height: 30px;
    font-size: 25.800px;
    white-space: nowrap;
}

.help {
    width: 20px;
    height: 20px;
    fill: #ccd6dd;
}

.summary-head {
    display: flex;
    justify-content: space-between;
    align-items: center;
}

.summary-head:first-child {
    height: 40px;
}

.summary-status {
    display: flex;
    align-items: center;
    height: 44px;
    margin-top: 1px;
    font-size: 45px;
    font-weight: 300;
}

.block-health .summary-status {
    margin-top: 3px;
}

.status-heart {
    width: 45px;
    height: 40px;
    margin-right: 12px;
    fill: #18be94;
}

.status-check {
    width: 44px;
    height: 44px;
    margin-right: 12px;
    fill: #18be94;
}

.status-ok {
    color: #18be94;
}

.revision {
    padding-top: 2px;
    font-size: 28px;
    color: #495763;
}

.revision a,
.more {
    color: #00a2b3;
}

.more {
    display: flex;
    justify-content: center;
    align-items: center;
    width: 120px;
    height: 40px;
    font-size: 24px;
    border: 2px solid #00a2b3;
    border-radius: 20px;
}

.commit {
    display: flex;
    justify-content: space-between;
    width: 649px;
    margin-top: 10px;
    font-size: 22px;
    line-height: 26px;
}

.commit-current {
    margin-top: 31px;
}

.commit-value {
    text-align: right;
    font-size: 22.800px;
}

.succeeded {
    margin-top: 12px;
    font-size: 22.400px;
    line-height: 28px;
    white-space: nowrap;
}

/* filters */
.content {
    flex-grow: 1;
    display: flex;
    min-height: 0;
}

.filters {
    width: 482px;
    flex-shrink: 0;
    padding: 20px 50px 0 20px;
    border-right: 2px solid #d3dbe1;
}

.filters-head {
    display: flex;
    align-items: center;
    height: 32px;
    margin-bottom: 32px;
    font-size: 26px;
    color: #6d7f8b;
}

.filters-head span {
    padding-top: 6px;
}

.filter-icon {
    width: 32px;
    height: 32px;
    margin-right: 33px;
    fill: #495763;
}

.filter-card {
    margin-bottom: 32px;
    padding: 24px 20px 32px;
    background-color: #fff;
    border-radius: 8px;
    box-shadow: 1px 1px 3px rgba(0, 0, 0, 0.12);
}

.filter-title {
    display: flex;
    justify-content: space-between;
    align-items: center;
    height: 30px;
    padding: 0 1px;
    font-size: 26px;
    font-weight: 500;
    color: #90a5b3;
}

.filter-caret {
    width: 0;
    height: 0;
    border-left: 11.500px solid transparent;
    border-right: 11.500px solid transparent;
    border-bottom: 13px solid #495763;
}

.filter-input {
    height: 74px;
    margin: 36px 0 2px;
    padding-left: 21px;
    font-size: 28px;
    line-height: 70px;
    color: #6d7f8b;
    border: 2px solid #90a5b3;
    border-radius: 6px;
}

.filter-rows {
    margin: 46px 0 8px;
    padding-left: 10px;
}

.rows-health {
    margin: 47px 0 8px;
}

.filter-row {
    display: flex;
    align-items: center;
    height: 40px;
    margin-bottom: 32px;
    font-size: 32px;
}

.filter-row:last-child {
    margin-bottom: 0;
}

.box {
    width: 40px;
    height: 40px;
    margin-right: 17px;
    border: 4px solid #495763;
    border-radius: 4px;
}

.row-icon {
    width: 31px;
    height: 31px;
    margin-right: 11px;
}

.row-green {
    fill: #18be94;
}

.row-grey {
    fill: #ccd6dd;
}

.row-missing .row-icon {
    width: 24px;
    margin-right: 10px;
}

/* graph */
.graph {
    position: relative;
    flex-grow: 1;
}

.edges {
    position: absolute;
    top: 0;
    left: 0;
    width: 2914px;
    height: 1554px;
}

.edge path {
    fill: none;
    stroke-width: 6;
    stroke-dasharray: 20 20;
}

.edge .tail {
    stroke-dasharray: none;
}

.edge-yellow path {
    stroke: #f4c030;
}

.edge-blue path {
    stroke: #0dadea;
}

.edge-green path {
    stroke: #96d68f;
}

.cloud {
    position: absolute;
    top: 47px;
    left: 562px;
    width: 160px;
    height: 113px;
    fill: #495763;
}

.orphaned {
    position: absolute;
    top: 20px;
    left: 2466px;
    display: flex;
    align-items: flex-start;
    font-size: 31.800px;
    line-height: 38px;
}

.orphaned-box {
    width: 40px;
    height: 42px;
    margin-right: 20px;
    background-color: #e33c42;
    border-bottom: 2px solid #00a2b3;
    border-radius: 4px;
}

.orphaned-box svg {
    display: block;
}

.node {
    position: relative;
    width: 564px;
    height: 104px;
    padding: 15px 0 0 33px;
    display: flex;
    background-color: #fff;
    border-radius: 8px;
    box-shadow: 1px 1px 3px rgba(0, 0, 0, 0.15);
}

.pods {
    position: absolute;
    top: 44px;
    left: 1488px;
    display: flex;
    flex-direction: column;
    gap: 30px;
}

.node-lb {
    position: absolute;
    top: 44px;
    left: 824px;
    padding-left: 21px;
    background-color: #dcf5f7;
}

.node-svc {
    position: absolute;
    left: 824px;
}

.svc-web {
    top: 446px;
}

.svc-www {
    top: 1116px;
}

.lb-icon {
    width: 80px;
    height: 64px;
    margin: 3px 32px 0 0;
    fill: #f4c030;
}

.lb-name {
    margin-top: 7px;
}

.kind {
    width: 58px;
    flex-shrink: 0;
    display: flex;
    flex-direction: column;
    align-items: center;
    margin-top: 7px;
}

.kind svg {
    fill: #90a5b3;
    flex-shrink: 0;
}

.kind span {
    font-size: 22px;
    line-height: 26px;
    white-space: nowrap;
    margin-top: 2px;
}

.kind-pod,
.kind-ing {
    width: 58px;
    height: 56px;
}

.kind-svc {
    width: 72px;
    height: 54px;
    margin-top: 2px;
}

.node-info {
    width: 373px;
    margin: 6px 0 0 43px;
    flex-shrink: 0;
}

.node-name {
    font-size: 25.600px;
    line-height: 32px;
    white-space: nowrap;
    overflow: hidden;
    text-overflow: ellipsis;
}

.node-status {
    display: flex;
    align-items: center;
    height: 26px;
    margin-top: 1px;
}

.st-heart {
    width: 26px;
    height: 24px;
    margin-right: 4px;
    fill: #18be94;
}

.st-check {
    width: 25px;
    height: 25px;
    fill: #18be94;
}

.st-link {
    width: 26px;
    height: 26px;
    margin-left: 11px;
}

.st-caret {
    width: 0;
    height: 0;
    margin-left: 10px;
    border-left: 8px solid transparent;
    border-right: 8px solid transparent;
    border-top: 9px solid #00a2b3;
}

.node-dots {
    position: absolute;
    top: 32px;
    right: 25px;
    width: 11px;
    height: 38px;
    fill: #00a2b3;
}

.badges {
    position: absolute;
    top: 94px;
    right: 5px;
    display: flex;
    gap: 3px;
}

.badges span {
    height: 32px;
    padding: 0 10px;
    font-size: 19.500px;
    line-height: 28px;
    white-space: nowrap;
    background-color: #ccd6dd;
    border: 2px solid #90a5b3;
    border-radius: 8px;
}
```
